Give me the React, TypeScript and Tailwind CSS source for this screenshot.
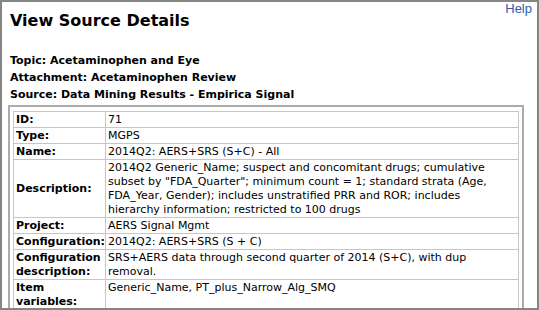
import type { ReactNode } from "react";

const rows: { label: string; value: ReactNode }[] = [
  { label: "ID:", value: "71" },
  { label: "Type:", value: "MGPS" },
  { label: "Name:", value: "2014Q2: AERS+SRS (S+C) - All" },
  {
    label: "Description:",
    value: (
      <>
        2014Q2 Generic_Name; suspect and concomitant drugs; cumulative subset by
        "FDA_Quarter"; minimum count = 1; standard strata (Age, FDA_Year,
        Gender); includes unstratified PRR and ROR; includes
        <br />
        hierarchy information; restricted to 100 drugs
      </>
    ),
  },
  { label: "Project:", value: "AERS Signal Mgmt" },
  { label: "Configuration:", value: "2014Q2: AERS+SRS (S + C)" },
  {
    label: "Configuration description:",
    value: "SRS+AERS data through second quarter of 2014 (S+C), with dup removal.",
  },
  { label: "Item variables:", value: "Generic_Name, PT_plus_Narrow_Alg_SMQ" },
];

const App = () => {
  return (
    <div className="h-[310px] w-[539px] overflow-hidden border-2 border-[#858585] bg-white font-['DejaVu_Sans',Verdana,sans-serif] text-black">
      <div className="flex items-start justify-between">
        <h1 className="ml-[8px] mt-[8px] text-[16px] font-bold leading-[22px]">
          View Source Details
        </h1>
        <a
          href="#"
          className="mr-[5px] font-['Liberation_Sans',Arial,sans-serif] text-[13px] leading-[13px] text-[#2a5db0]"
        >
          Help
        </a>
      </div>

      <div className="ml-[8px] mt-[20px] text-[11px] font-bold leading-[17px]">
        <p>Topic: Acetaminophen and Eye</p>
        <p>Attachment: Acetaminophen Review</p>
        <p>Source: Data Mining Results - Empirica Signal</p>
      </div>

      <div className="ml-[6px] mt-[2px] w-[516px] border-2 border-[#ababab] px-[3px] pt-[4px]">
        <table className="w-full table-fixed border-collapse text-[11px] leading-[14px]">
          <colgroup>
            <col className="w-[92px]" />
            <col />
          </colgroup>
          <tbody>
            {rows.map((row) => (
              <tr key={row.label}>
                <td className="border border-[#c6c6c6] px-[2px] pt-px align-middle font-bold">
                  {row.label}
                </td>
                <td className="border border-[#c6c6c6] px-[2px] pt-px align-top">
                  {row.value}
                </td>
              </tr>
            ))}
          </tbody>
        </table>
      </div>
    </div>
  );
};

export default App;
